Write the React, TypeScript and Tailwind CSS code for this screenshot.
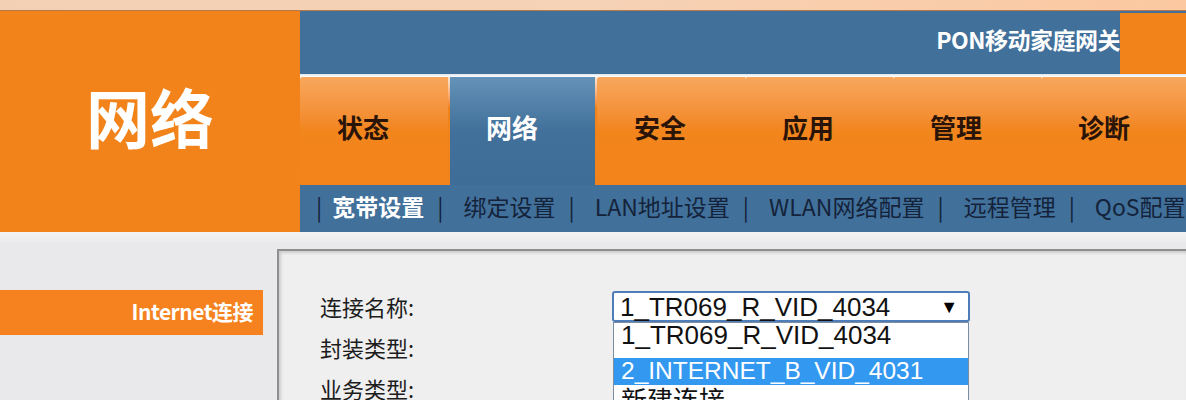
import React from "react";

const tabs = ["状态", "网络", "安全", "应用", "管理", "诊断"];
const subMenu = ["宽带设置", "绑定设置", "LAN地址设置", "WLAN网络配置", "远程管理", "QoS配置"];

const cjk = { fontFamily: '"Noto Sans CJK SC", "Noto Sans", sans-serif' };
const arial = { fontFamily: '"Liberation Sans", Arial, sans-serif' };

const App: React.FC = () => {
  return (
    <div className="w-[1186px] h-[400px] overflow-hidden bg-[#e9e9eb]" style={cjk}>
      {/* top strip */}
      <div className="h-[10px] bg-gradient-to-r from-[#f3cfb4] via-[#f6d2b6] to-[#fbc8a0]" />

      {/* header */}
      <div className="flex h-[222px] border-t border-[#b4784a]">
        <div className="w-[300px] shrink-0 bg-[#f2831a] flex items-center justify-center pb-[14px]">
          <span className="text-[64px] leading-none font-bold text-white">网络</span>
        </div>

        <div className="flex-1 min-w-0 flex flex-col overflow-hidden">
          <div className="h-[63px] flex bg-[#41709a]">
            <div className="flex-1 flex items-center justify-end pb-[6px]">
              <span className="text-[23px] font-bold text-white tracking-[-0.5px]">PON移动家庭网关</span>
            </div>
            <div className="w-[66px] mt-[2px] bg-[#f2831a]" />
          </div>

          <div className="h-[3px] bg-gradient-to-b from-[#dfe6ee] to-white" />

          <div className="h-[109px] flex bg-gradient-to-b from-[#fde8d6] to-[#f2831a] to-[30px]">
            {tabs.map((t, i) => {
              const active = i === 1;
              return (
                <div
                  key={t}
                  className={
                    active
                      ? "w-[145px] shrink-0 mx-[2px] flex items-center pl-[36px] pb-[8px] bg-gradient-to-b from-[#6492b8] via-[#41709a] to-[#3e6e97]"
                      : "w-[148px] shrink-0 last:flex-1 flex items-center pl-[37px] pb-[8px] bg-gradient-to-b from-[#f7a75c] via-[#f2851c] to-[#f2831a] rounded-tl-[3px]"
                  }
                >
                  <span
                    className={
                      active
                        ? "text-[26px] font-bold text-white"
                        : "text-[26px] font-bold text-[#2a1408]"
                    }
                  >
                    {t}
                  </span>
                </div>
              );
            })}
          </div>

          <div className="h-[47px] bg-[#41709a] flex items-center pl-[16px] pb-[4px] text-[23px] text-[#14233a] whitespace-nowrap">
            {subMenu.map((s, i) => (
              <React.Fragment key={s}>
                {i === 0 && <span className="mr-[10px]">|</span>}
                <span className={i === 0 ? "font-bold text-white" : ""}>{s}</span>
                {i < subMenu.length - 1 && <span className="ml-[13px] mr-[20px]">|</span>}
              </React.Fragment>
            ))}
          </div>
        </div>
      </div>

      {/* body */}
      <div className="flex h-[168px] bg-gradient-to-b from-[#f4f4f5] to-[#e9e9eb] to-[12px]">
        <div className="w-[277px] shrink-0 pt-[58px]">
          <div className="w-[263px] h-[45px] bg-[#f5821e] flex items-center justify-end pr-[10px] pb-[2px]">
            <span className="text-[21px] font-bold text-white tracking-[-0.5px]">Internet连接</span>
          </div>
        </div>

        <div className="flex-1 min-w-0 mt-[17px] bg-[#efeff0] border-l-2 border-t-2 border-[#8e8e8e] shadow-[inset_2px_2px_3px_rgba(0,0,0,0.15)] pl-[41px] pt-[35px]">
          <div className="grid grid-cols-[292px_1fr] text-[22px] text-[#1c1c1c] leading-[41px]">
            <div>连接名称:</div>
            <div className="relative flex items-center">
              <div className="relative w-[358px] h-[31px] bg-white border-2 border-[#4f7db8] rounded-[3px] flex items-center pl-[6px]">
                <span className="text-[26px] leading-none text-[#111]" style={arial}>
                  1_TR069_R_VID_4034
                </span>
                <span className="absolute right-[10px] top-[5px] text-[18px] leading-none text-black" style={arial}>
                  ▼
                </span>
              </div>
              <div
                className="absolute left-[1px] top-[36px] w-[356px] bg-white border border-[#7c8ca3] text-[26px] leading-[27px]"
                style={arial}
              >
                <div className="h-[35px] pl-[7px] text-[#111] leading-[24px]">1_TR069_R_VID_4034</div>
                <div className="h-[27px] pl-[7px] bg-[#3298f0] text-white text-[24.5px] leading-[26px]">
                  2_INTERNET_B_VID_4031
                </div>
                <div className="h-[30px] pl-[7px] text-[#111]" style={cjk}>
                  新建连接
                </div>
              </div>
            </div>
            <div>封装类型:</div>
            <div />
            <div>业务类型:</div>
            <div />
          </div>
        </div>
      </div>
    </div>
  );
};

export default App;
